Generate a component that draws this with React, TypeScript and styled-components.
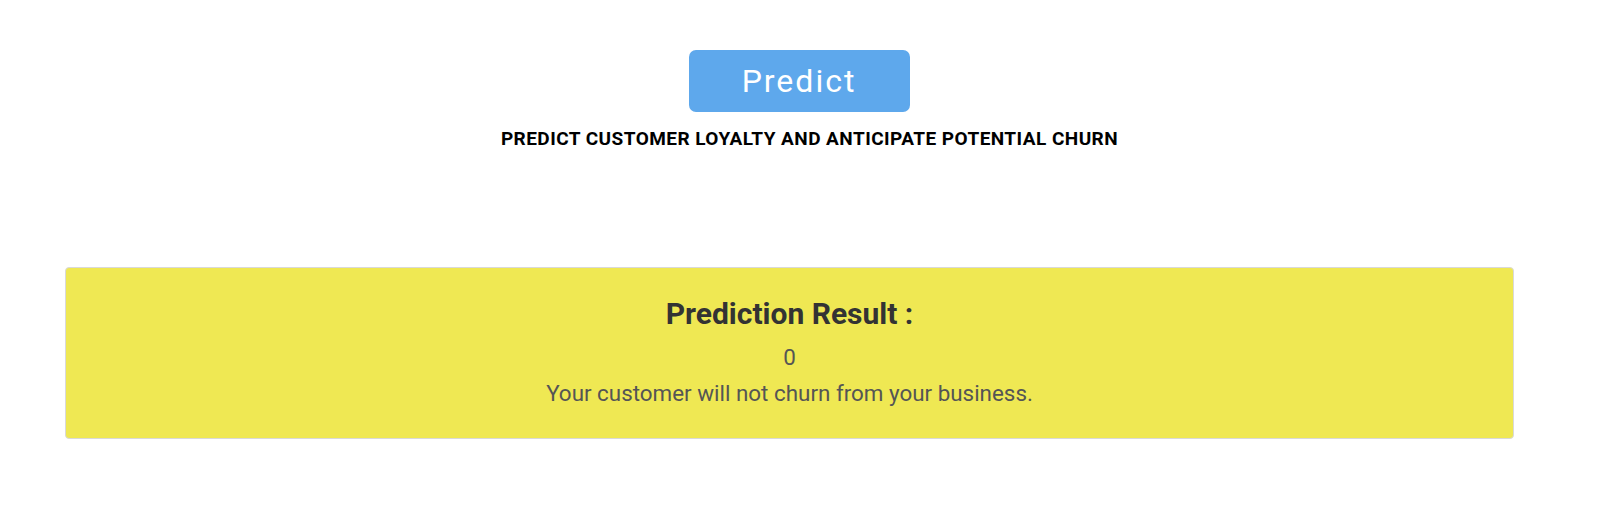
import styled, { createGlobalStyle } from "styled-components";

const GlobalStyle = createGlobalStyle`
  body {
    margin: 0;
    background: #ffffff;
    font-family: Roboto, "Liberation Sans", sans-serif;
  }
`;

const Page = styled.div`
  display: flex;
  flex-direction: column;
  padding: 50px 0 90px;
`;

const Header = styled.div`
  display: flex;
  flex-direction: column;
  align-items: center;
`;

const PredictButton = styled.button`
  width: 221px;
  height: 62px;
  margin-right: 21px;
  border: none;
  border-radius: 7px;
  background: #5ea8ec;
  color: #ffffff;
  font-family: Roboto, sans-serif;
  font-size: 32px;
  font-weight: 400;
  letter-spacing: 2px;
  cursor: pointer;
`;

const Tagline = styled.h4`
  margin: 14px 0 0;
  font-family: Roboto, sans-serif;
  font-size: 19px;
  font-weight: 700;
  letter-spacing: 0.45px;
  line-height: 26px;
  color: #000000;
  text-transform: uppercase;
`;

const ResultCard = styled.div`
  margin: 115px 105px 0 65px;
  padding: 28px 20px 27px;
  background: #efe853;
  border: 1px solid #d9d9d9;
  border-radius: 4px;
  text-align: center;
`;

const ResultTitle = styled.h2`
  margin: 0 0 7px;
  font-size: 30px;
  font-weight: 700;
  line-height: 36px;
  color: #333333;
`;

const ResultLine = styled.p`
  margin: 0;
  font-size: 22.4px;
  line-height: 36px;
  color: #555555;
`;

export default function App(): JSX.Element {
  return (
    <>
      <GlobalStyle />
      <Page>
        <Header>
          <PredictButton>Predict</PredictButton>
          <Tagline>Predict customer loyalty and anticipate potential churn</Tagline>
        </Header>
        <ResultCard>
          <ResultTitle>Prediction Result :</ResultTitle>
          <ResultLine>0</ResultLine>
          <ResultLine>Your customer will not churn from your business.</ResultLine>
        </ResultCard>
      </Page>
    </>
  );
}
